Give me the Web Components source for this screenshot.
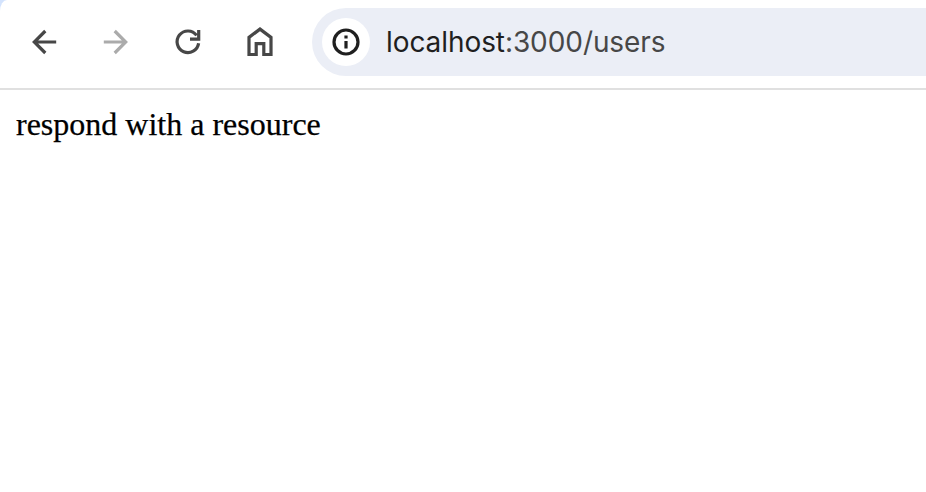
<!DOCTYPE html>
<html lang="en">
<head>
<meta charset="utf-8">
<title>localhost:3000/users</title>
<style>
html, body { margin: 0; height: 100%; overflow: hidden; background: #fff; }
</style>
</head>
<body>
<browser-window>
  <browser-toolbar slot="toolbar">
    <tool-icon name="back"></tool-icon>
    <tool-icon name="forward"></tool-icon>
    <tool-icon name="reload"></tool-icon>
    <tool-icon name="home"></tool-icon>
    <address-bar slot="address" host="localhost" path=":3000/users"></address-bar>
  </browser-toolbar>
  <page-view>respond with a resource</page-view>
</browser-window>
<script>
class Base extends HTMLElement {
  connectedCallback() {
    if (!this.shadowRoot) this.attachShadow({ mode: "open" }).innerHTML = this.view();
  }
}

customElements.define("browser-window", class extends Base {
  view() {
    return `<style>
      :host { display: flex; flex-direction: column; height: 100vh; background: #fff; }
    </style><slot name="toolbar"></slot><slot></slot>`;
  }
});

customElements.define("browser-toolbar", class extends Base {
  view() {
    return `<style>
      :host { display: block; flex: none; background: #d3e3fd; }
      .bar { box-sizing: border-box; height: 90px; display: flex; align-items: center; padding: 0 0 4px 28px;
             background: #fff; border-bottom: 2px solid #e0e0e0; border-top-left-radius: 7px 11px; }
      nav { display: flex; gap: 40px; margin-right: 36px; color: #474747; }
      ::slotted(address-bar) { flex: 1; }
    </style><div class="bar"><nav><slot></slot></nav><slot name="address"></slot></div>`;
  }
});

const ICONS = {
  back: '<path d="M28.2 16H6.6M17.3 5 6.3 16l11 11"/>',
  forward: '<path d="M3.8 16h21.6M14.7 5l11 11-11 11"/>',
  reload: '<path d="M26.6 17.3A10.8 10.8 0 1 1 24.6 9.4M26.7 4v9.1H18"/>',
  home: '<path d="M5 28.5V11.4L16 3.1l11 8.3v17.1h-7.2V17.7h-7.6v10.8z"/>',
  info: '<circle cx="16" cy="16" r="12"/><path d="M16 15v7.6M16 9.5v3"/>'
};

customElements.define("tool-icon", class extends Base {
  view() {
    return `<style>
      :host { display: block; width: 32px; height: 32px; }
      :host([name="forward"]) { color: #ababab; }
      svg { display: block; fill: none; stroke: currentColor; stroke-width: 3.2; }
    </style><svg width="32" height="32" viewBox="0 0 32 32">${ICONS[this.getAttribute("name")]}</svg>`;
  }
});

customElements.define("address-bar", class extends Base {
  view() {
    return `<style>
      :host { box-sizing: border-box; display: flex; align-items: center; gap: 16px; height: 68px; padding-left: 10px;
              background: #ebeef6; border-radius: 34px 0 0 34px; letter-spacing: -0.08px;
              font: 28px/34px Inter, "Liberation Sans", sans-serif; color: #474747; white-space: nowrap; }
      .site { display: grid; place-items: center; width: 48px; height: 48px; border-radius: 50%; background: #fff; color: #1f1f1f; }
      b { font-weight: 400; color: #1f1f1f; }
    </style><div class="site"><tool-icon name="info"></tool-icon></div>
    <span><b>${this.getAttribute("host")}</b>${this.getAttribute("path")}</span>`;
  }
});

customElements.define("page-view", class extends Base {
  view() {
    return `<style>
      :host { display: block; flex: 1; padding: 16px; font: 32px/36px "Liberation Serif", serif; color: #000;
              -webkit-text-stroke: 0.25px #000; }
    </style><slot></slot>`;
  }
});
</script>
</body>
</html>
